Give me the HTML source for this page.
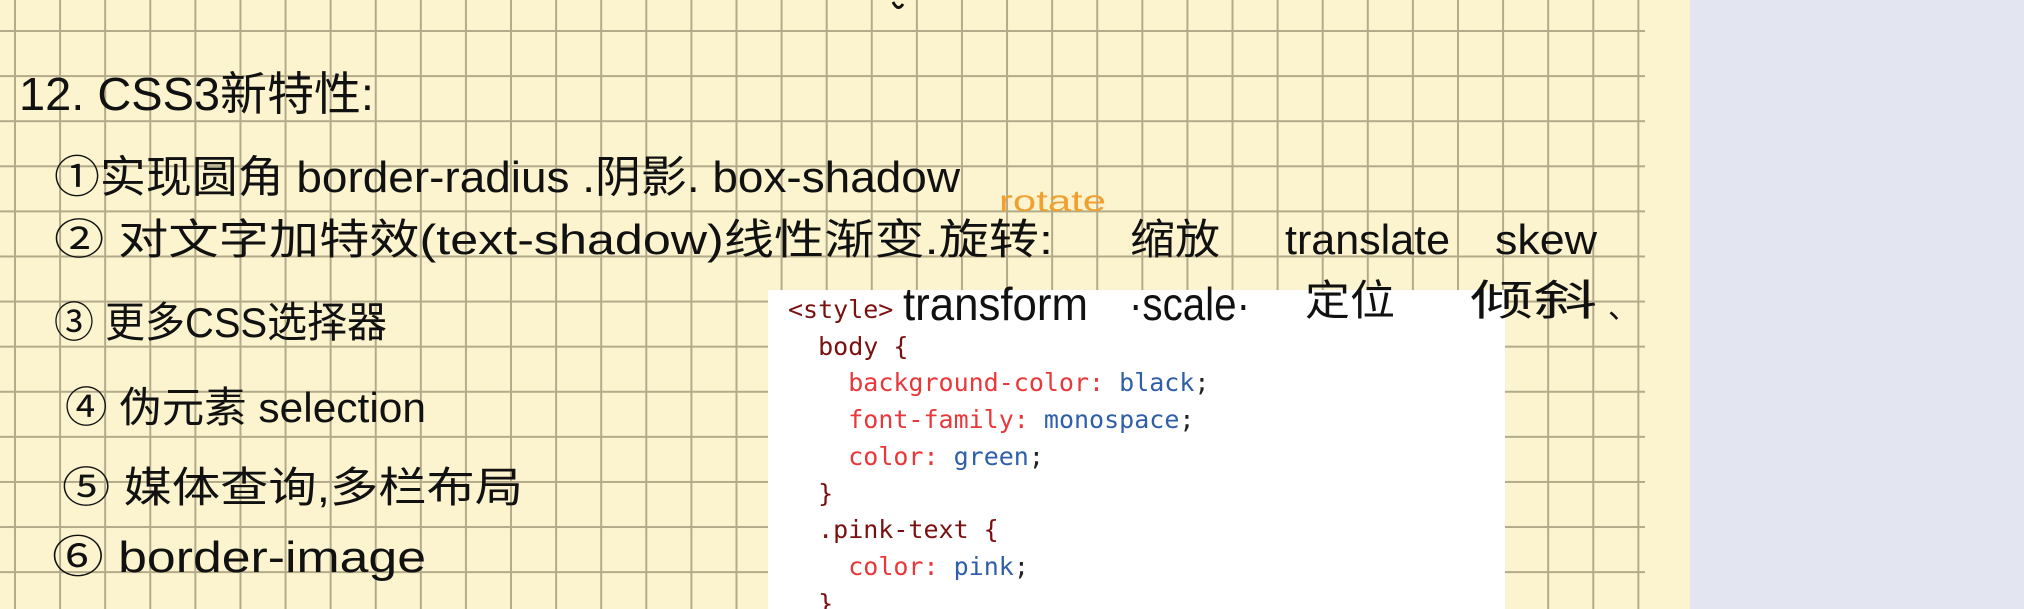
<!DOCTYPE html>
<html><head><meta charset="utf-8"><style>
html,body{margin:0;padding:0;width:2024px;height:609px;overflow:hidden;background:#e3e6f0;position:relative;}
#paper{position:absolute;left:0;top:0;width:1690px;height:609px;background-color:#fbf4cf;
background-image:linear-gradient(90deg,#b3aa8a 2px,transparent 2px),linear-gradient(0deg,#b3aa8a 2px,transparent 2px);
background-size:45.1px 45.1px;background-position:14px 32px;}
#mask{position:absolute;left:1645px;top:0;width:45px;height:609px;background:#fbf4cf;}
#code{position:absolute;left:768px;top:290px;width:737px;height:319px;background:#fff;overflow:hidden;}
pre{margin:0;position:absolute;left:20px;top:2px;font:25px/36.7px "DejaVu Sans Mono","Liberation Mono",monospace;color:#7a1010;}
.p{color:#e8383a}.v{color:#2f5fa8}.k{color:#222}
svg{position:absolute;left:0;top:0}
svg text{font-family:"Liberation Sans","Noto Sans CJK SC",sans-serif;fill:#111;}
</style></head><body>
<div id="paper"></div><div id="mask"></div>
<div id="code"><pre>&lt;style&gt;
  body {
    <span class="p">background-color:</span> <span class="v">black</span><span class="k">;</span>
    <span class="p">font-family:</span> <span class="v">monospace</span><span class="k">;</span>
    <span class="p">color:</span> <span class="v">green</span><span class="k">;</span>
  }
  .pink-text {
    <span class="p">color:</span> <span class="v">pink</span><span class="k">;</span>
  }</pre></div>
<svg width="2024" height="609">
<path d="M893 2 Q898 12 903 4" stroke="#111" stroke-width="3" fill="none"/>
<text x="19" y="110" font-size="46" textLength="355" lengthAdjust="spacingAndGlyphs">12. CSS3新特性:</text>
<text x="54" y="192" font-size="44" textLength="906" lengthAdjust="spacingAndGlyphs">①实现圆角 border-radius .阴影. box-shadow</text>
<text x="999" y="211" font-size="30" style="fill:#f0a030" textLength="107" lengthAdjust="spacingAndGlyphs">rotate</text>
<text x="54" y="254" font-size="42" textLength="999" lengthAdjust="spacingAndGlyphs">② 对文字加特效(text-shadow)线性渐变.旋转:</text>
<text x="1130" y="254" font-size="42" textLength="90" lengthAdjust="spacingAndGlyphs">缩放</text>
<text x="1285" y="254" font-size="42" textLength="165" lengthAdjust="spacingAndGlyphs">translate</text>
<text x="1495" y="254" font-size="42" textLength="102" lengthAdjust="spacingAndGlyphs">skew</text>
<text x="54" y="337" font-size="42" textLength="333" lengthAdjust="spacingAndGlyphs">③ 更多CSS选择器</text>
<text x="903" y="320" font-size="46" textLength="185" lengthAdjust="spacingAndGlyphs">transform</text>
<text x="1129" y="320" font-size="46" textLength="121" lengthAdjust="spacingAndGlyphs">·scale·</text>
<text x="1305" y="315" font-size="42" textLength="90" lengthAdjust="spacingAndGlyphs">定位</text>
<text x="1470" y="315" font-size="42" textLength="127" lengthAdjust="spacingAndGlyphs">倾斜</text>
<text x="1608" y="318" font-size="30">、</text>
<text x="65" y="422" font-size="42" textLength="361" lengthAdjust="spacingAndGlyphs">④ 伪元素 selection</text>
<text x="62" y="502" font-size="42" textLength="461" lengthAdjust="spacingAndGlyphs">⑤ 媒体查询,多栏布局</text>
<text x="52" y="572" font-size="44" textLength="374" lengthAdjust="spacingAndGlyphs">⑥ border-image</text>
</svg>
</body></html>
